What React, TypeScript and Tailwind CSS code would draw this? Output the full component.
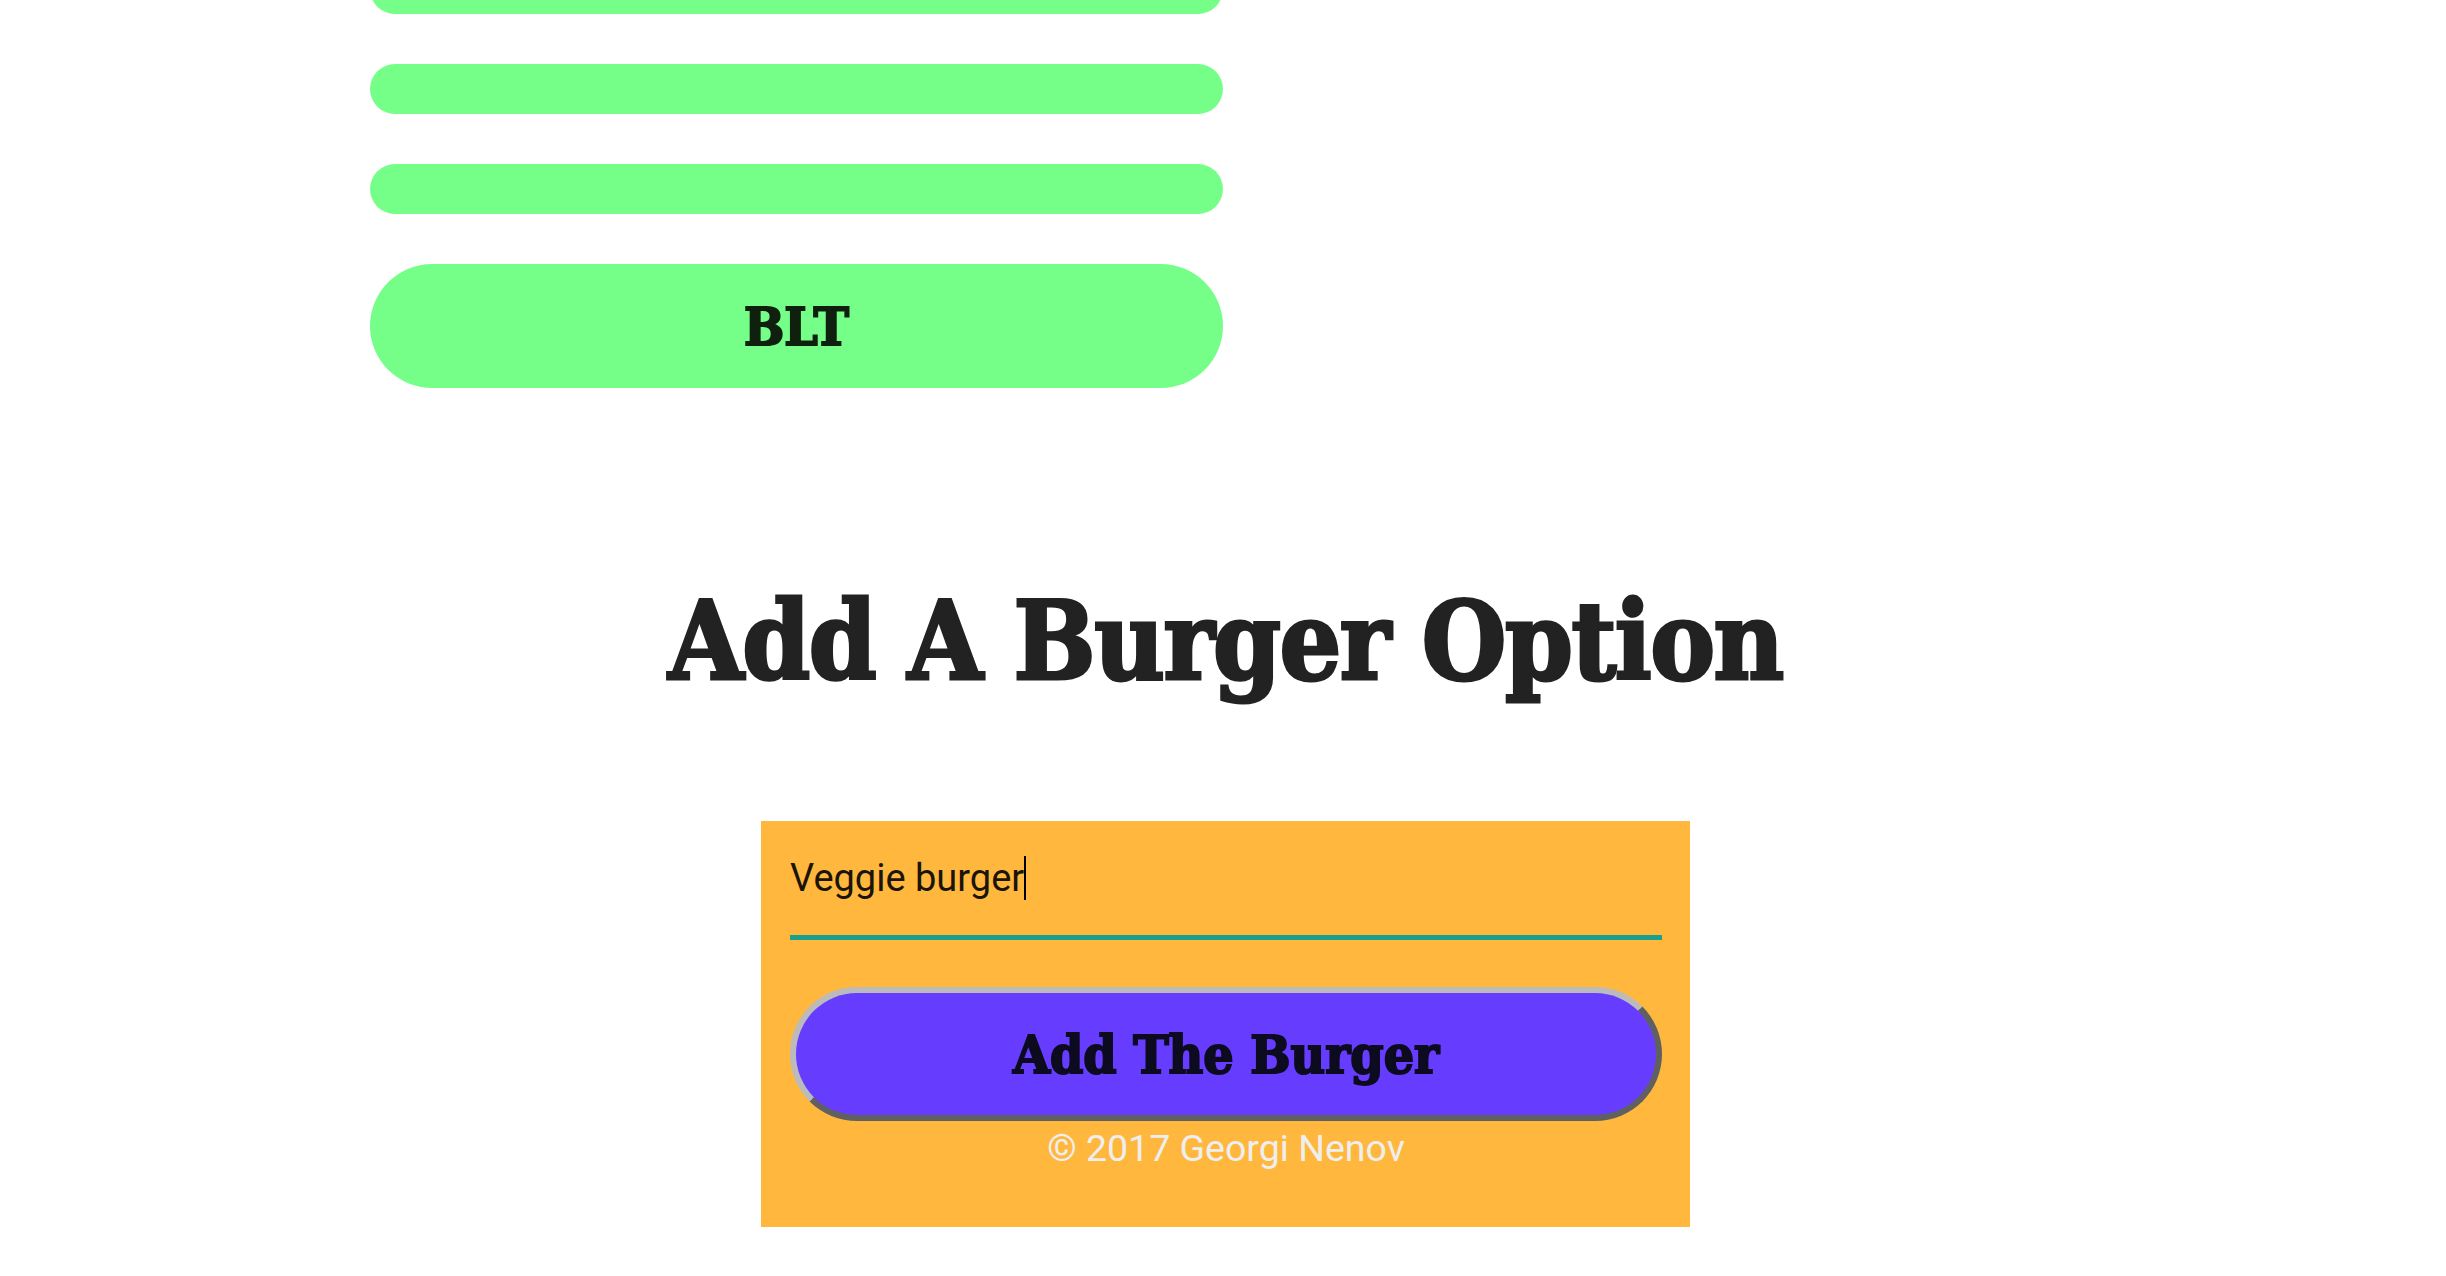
import React from "react"

const slab = "font-['DejaVu_Serif_Condensed','DejaVu_Serif',serif] font-bold [font-stretch:condensed]"

const burgers = ["", "", "", "BLT"]

function BurgerBar({ name }: { name: string }) {
  if (!name) {
    return <div className="h-[50px] w-full rounded-full bg-[#76ff88]" />
  }
  return (
    <div className="flex h-[124px] w-full items-center justify-center rounded-full bg-[#76ff88]">
      <span className={`${slab} text-[53px] leading-none text-[#10200f] [-webkit-text-stroke:2px_#10200f]`}>{name}</span>
    </div>
  )
}

export default function App() {
  return (
    <div className="min-h-screen overflow-hidden bg-white">
      <div className="mx-auto w-[1706px]">
        <div className="grid grid-cols-2">
          <div className="mt-[-36px] flex flex-col gap-[50px]">
            {burgers.map((b, i) => (
              <BurgerBar key={i} name={b} />
            ))}
          </div>
          <div />
        </div>

        <div className="pl-[5px]">
          <h1 className={`${slab} mt-[199px] h-[108px] text-center text-[108px] leading-none tracking-[-1.5px] text-[#222222] [-webkit-text-stroke:3px_#222222]`}>
            Add A Burger Option
          </h1>

          <form className="mx-auto mt-[126px] flex h-[406px] w-[929px] flex-col bg-[#ffb83d] pl-[29px] pr-[28px] pt-[35px]">
            <div className="flex h-[44px] items-center font-['Roboto',sans-serif] text-[38px] leading-[44px] text-[#1b1408]">
              <span>Veggie burger</span>
              <span className="h-[44px] w-[2px] bg-black" />
            </div>
            <div className="mt-[35px] h-[5px] w-full bg-[#19a08d]" />

            <button
              type="button"
              className="mt-[47px] flex h-[134px] w-full items-center justify-center rounded-full border-[6px] border-b-[#606060] border-l-[#bbbbbb] border-r-[#606060] border-t-[#bbbbbb] bg-[#663dff]"
            >
              <span className={`${slab} text-[53px] leading-none text-[#0d0b20] [-webkit-text-stroke:2px_#0d0b20]`}>Add The Burger</span>
            </button>

            <p className="mt-[6px] text-center font-['Roboto',sans-serif] text-[37.5px] leading-[42px] text-[#eeeeee]">
              © 2017 Georgi Nenov
            </p>
          </form>
        </div>
      </div>
    </div>
  )
}
